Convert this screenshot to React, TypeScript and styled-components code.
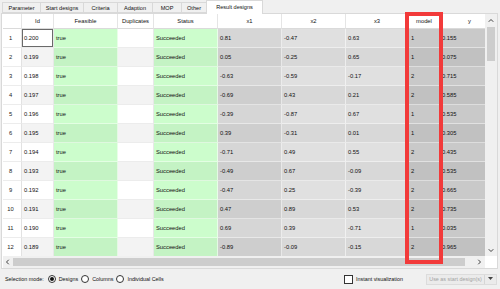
import React from "react";
import styled, { createGlobalStyle } from "styled-components";

const GlobalStyle = createGlobalStyle`
  html, body { margin: 0; padding: 0; background: #f0f0f0; }
  body { font-family: "Liberation Sans", Arial, sans-serif; color: #111; }
`;

type Kind = "plain" | "green" | "mid" | "light" | "dark";

const bg: Record<Kind, [string, string]> = {
  plain: ["#ffffff", "#f3f3f3"],
  green: ["#ccfdcc", "#c4f3c4"],
  mid: ["#d6d6d6", "#cecece"],
  light: ["#e0e0e0", "#d8d8d8"],
  dark: ["#c9c9c9", "#c1c1c1"],
};

const Window = styled.div`
  position: relative;
  width: 500px;
  height: 289px;
  display: flex;
  flex-direction: column;
  background: #f0f0f0;
  overflow: hidden;
`;

const TabBar = styled.div`
  display: flex;
  align-items: flex-end;
  height: 13px;
  padding-left: 3px;
  position: relative;
  z-index: 1;
`;

const Tab = styled.div<{ $w: number; $active?: boolean }>`
  box-sizing: border-box;
  width: ${(p) => p.$w}px;
  height: ${(p) => (p.$active ? 14 : 11)}px;
  margin-left: -1px;
  margin-bottom: ${(p) => (p.$active ? -1 : 0)}px;
  border: 1px solid #d9d9d9;
  border-bottom: ${(p) => (p.$active ? "none" : "1px solid #d9d9d9")};
  background: ${(p) => (p.$active ? "#ffffff" : "#f0f0f0")};
  font-size: 5.6px;
  display: flex;
  align-items: center;
  justify-content: center;
  padding-bottom: ${(p) => (p.$active ? 1 : 0)}px;
`;

const Pane = styled.div`
  flex: 1;
  margin: 0 2px 0 1px;
  border: 1px solid #d9d9d9;
  background: #ffffff;
  padding-left: 1px;
  display: grid;
  grid-template-columns: 1fr 12px;
  grid-template-rows: 1fr 12px;
  min-height: 0;
`;

const Content = styled.div`
  overflow: hidden;
  min-height: 0;
`;

const Table = styled.div`
  display: grid;
  grid-template-columns: 19px 32px 64px 36px 64px 64px 64px 63px 31px 60px;
  grid-template-rows: 15px;
  grid-auto-rows: 19px;
  font-size: 5.8px;
`;

const HeadCell = styled.div`
  box-sizing: border-box;
  background: #ffffff;
  border-right: 1px solid #e5e5e5;
  border-bottom: 1px solid #dadada;
  display: flex;
  align-items: center;
  justify-content: center;
  white-space: nowrap;
  overflow: hidden;
`;

const RowHead = styled.div`
  box-sizing: border-box;
  background: #ffffff;
  border-right: 1px solid #e2e2e2;
  border-bottom: 1px solid #ececec;
  display: flex;
  align-items: center;
  justify-content: center;
  padding-right: 3px;
  color: #222;
`;

const Cell = styled.div<{ $kind: Kind; $even: boolean; $focus?: boolean }>`
  box-sizing: border-box;
  background: ${(p) => bg[p.$kind][p.$even ? 1 : 0]};
  border-right: 1px solid ${(p) => (p.$kind === "plain" ? "#e8e8e8" : "rgba(255,255,255,0.55)")};
  border-bottom: 1px solid ${(p) => (p.$kind === "plain" ? "#ececec" : "rgba(255,255,255,0.45)")};
  box-shadow: ${(p) => (p.$focus ? "inset 0 0 0 1px #6a6a6a" : "none")};
  display: flex;
  align-items: center;
  padding-left: 2px;
  white-space: nowrap;
  overflow: hidden;
`;

const VScroll = styled.div`
  background: #f0f0f0;
  display: flex;
  flex-direction: column;
  align-items: stretch;
`;

const HScroll = styled.div`
  background: #f0f0f0;
  display: flex;
  align-items: stretch;
`;

const Arrow = styled.div<{ $size: number }>`
  flex: 0 0 ${(p) => p.$size}px;
  display: flex;
  align-items: center;
  justify-content: center;
  color: #555;
`;

const Thumb = styled.div<{ $size: number; $vertical?: boolean }>`
  flex: 0 0 ${(p) => p.$size}px;
  background: #cdcdcd;
  margin: ${(p) => (p.$vertical ? "0 2px" : "2px 0")};
`;

const Track = styled.div`
  flex: 1;
`;

const Corner = styled.div`
  background: #ffffff;
`;

const BottomBar = styled.div`
  height: 20px;
  display: flex;
  align-items: center;
  padding: 0 3px 0 5px;
  font-size: 5.4px;
`;

const Label = styled.span`
  margin-right: 4px;
`;

const Radio = styled.span<{ $checked?: boolean }>`
  box-sizing: border-box;
  width: 8px;
  height: 8px;
  border-radius: 50%;
  border: 1px solid #333;
  background: #fff;
  display: inline-flex;
  align-items: center;
  justify-content: center;
  margin-right: 3px;
  &::after {
    content: "";
    width: 4px;
    height: 4px;
    border-radius: 50%;
    background: ${(p) => (p.$checked ? "#111" : "transparent")};
  }
`;

const Option = styled.span`
  margin-right: 3px;
`;

const Spacer = styled.div`
  flex: 1;
`;

const Check = styled.span`
  box-sizing: border-box;
  width: 9px;
  height: 9px;
  border: 1px solid #333;
  background: #fff;
  margin-right: 3px;
`;

const SplitButton = styled.div`
  box-sizing: border-box;
  margin-left: 23px;
  width: 71px;
  height: 11px;
  display: flex;
  background: #ebebeb;
  border: 1px solid #dcdcdc;
  color: #a3a3a3;
`;

const ButtonMain = styled.div`
  flex: 1;
  display: flex;
  align-items: center;
  justify-content: center;
  border-right: 1px solid #d6d6d6;
`;

const ButtonDrop = styled.div`
  width: 11px;
  display: flex;
  align-items: center;
  justify-content: center;
  color: #444;
`;

const Highlight = styled.div`
  position: absolute;
  left: 405px;
  top: 12px;
  width: 38px;
  height: 252px;
  box-sizing: border-box;
  border: 4px solid #f23a3a;
  pointer-events: none;
`;

const Chevron = ({ dir }: { dir: "up" | "down" | "left" | "right" }) => {
  const d = {
    up: "M1 5 L4 2 L7 5",
    down: "M1 3 L4 6 L7 3",
    left: "M5 1 L2 4 L5 7",
    right: "M3 1 L6 4 L3 7",
  }[dir];
  return (
    <svg width="6" height="6" viewBox="0 0 8 8">
      <path d={d} fill="none" stroke="#3c3c3c" strokeWidth="1.3" />
    </svg>
  );
};

const tabs: [string, number][] = [
  ["Parameter", 39],
  ["Start designs", 44],
  ["Criteria", 35],
  ["Adaption", 36],
  ["MOP", 30],
  ["Other", 26],
];

const columns: { title: string; kind: Kind }[] = [
  { title: "Id", kind: "plain" },
  { title: "Feasible", kind: "green" },
  { title: "Duplicates", kind: "plain" },
  { title: "Status", kind: "green" },
  { title: "x1", kind: "mid" },
  { title: "x2", kind: "light" },
  { title: "x3", kind: "light" },
  { title: "model", kind: "dark" },
  { title: "y", kind: "dark" },
];

const x1 = ["0.81", "0.05", "-0.63", "-0.69", "-0.39", "0.39", "-0.71", "-0.49", "-0.47", "0.47", "0.69", "-0.89"];
const x2 = ["-0.47", "-0.25", "-0.59", "0.43", "-0.87", "-0.31", "0.49", "0.67", "0.25", "0.89", "0.39", "-0.09"];
const x3 = ["0.63", "0.65", "-0.17", "0.21", "0.67", "0.01", "0.55", "-0.09", "-0.39", "0.53", "-0.71", "-0.15"];
const model = ["1", "1", "2", "2", "1", "1", "2", "2", "2", "2", "1", "2"];
const yv = ["0.155", "0.075", "0.715", "0.585", "0.535", "0.305", "0.435", "0.535", "0.665", "0.735", "0.035", "0.965"];

const rows = x1.map((v, i) => [
  (0.2 - i * 0.001).toFixed(3),
  "true",
  "",
  "Succeeded",
  v,
  x2[i],
  x3[i],
  model[i],
  yv[i],
]);

// the 13th row is only a sliver under the scrollbar, so its cells stay empty
const partial = columns.map(() => "");

export default function App() {
  return (
    <Window>
      <GlobalStyle />
      <TabBar>
        {tabs.map(([t, w]) => (
          <Tab key={t} $w={w}>
            {t}
          </Tab>
        ))}
        <Tab $w={57} $active>
          Result designs
        </Tab>
      </TabBar>
      <Pane>
        <Content>
          <Table>
            <HeadCell />
            {columns.map((c) => (
              <HeadCell key={c.title}>{c.title}</HeadCell>
            ))}
            {[...rows, partial].map((r, i) => (
              <React.Fragment key={i}>
                <RowHead>{i < rows.length ? i + 1 : ""}</RowHead>
                {r.map((v, j) => (
                  <Cell key={j} $kind={columns[j].kind} $even={i % 2 === 1} $focus={i === 0 && j === 0}>
                    {v}
                  </Cell>
                ))}
              </React.Fragment>
            ))}
          </Table>
        </Content>
        <VScroll>
          <Arrow $size={13}>
            <Chevron dir="up" />
          </Arrow>
          <Thumb $size={34} $vertical />
          <Track />
          <Arrow $size={12}>
            <Chevron dir="down" />
          </Arrow>
        </VScroll>
        <HScroll>
          <Arrow $size={10}>
            <Chevron dir="left" />
          </Arrow>
          <Thumb $size={452} />
          <Track />
          <Arrow $size={12}>
            <Chevron dir="right" />
          </Arrow>
        </HScroll>
        <Corner />
      </Pane>
      <BottomBar>
        <Label>Selection mode:</Label>
        <Radio $checked />
        <Option>Designs</Option>
        <Radio />
        <Option>Columns</Option>
        <Radio />
        <Option>Individual Cells</Option>
        <Spacer />
        <Check />
        <span>Instant visualization</span>
        <SplitButton>
          <ButtonMain>Use as start design(s)</ButtonMain>
          <ButtonDrop>
            <svg width="5" height="4" viewBox="0 0 5 4">
              <path d="M0 0 L5 0 L2.5 3 Z" fill="#444" />
            </svg>
          </ButtonDrop>
        </SplitButton>
      </BottomBar>
      <Highlight />
    </Window>
  );
}
